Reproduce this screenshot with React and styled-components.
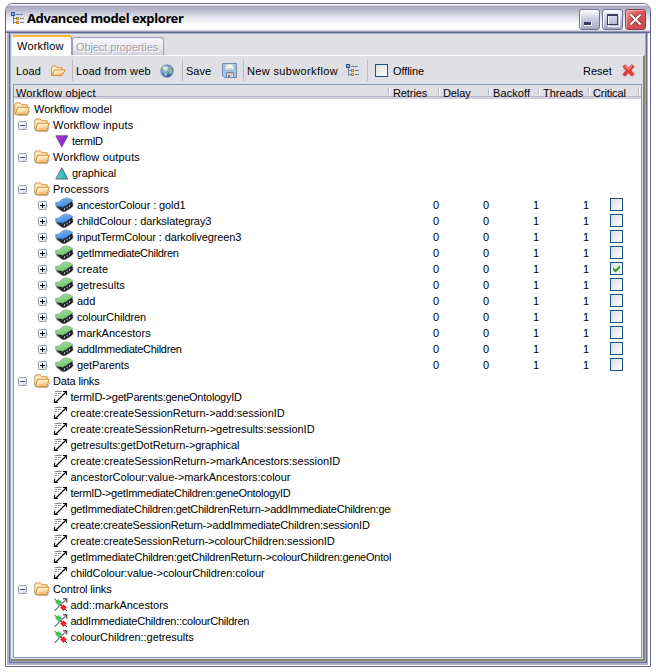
import React from "react";
import styled, { createGlobalStyle } from "styled-components";

const GlobalStyle = createGlobalStyle`
  * { box-sizing: border-box; }
  body {
    margin: 0;
    background: #fff;
    color: #000;
    font: 11px/16px "Liberation Sans", Arial, sans-serif;
    overflow: hidden;
  }
  svg { display: block; flex: none; }
`;

const Desktop = styled.div`
  width: 656px;
  height: 672px;
  padding: 3px 5px 5px;
`;

const WindowShell = styled.div`
  width: 646px;
  height: 664px;
  display: flex;
  flex-direction: column;
  border: 1px solid #65638a;
  border-radius: 8px 8px 0 0;
  background: #fff;
  overflow: hidden;
`;

const TitleBar = styled.header`
  flex: none;
  height: 29px;
  display: flex;
  align-items: center;
  padding: 0 4px 0 5px;
  background: linear-gradient(#fff 0, #fff 1px, #aaa9c3 2px, #b4b3cb 5px, #dddde8 12px, #fbfbfd 20px, #fff 25px, #cccbdc 27px, #65678c 28px);
`;

const Title = styled.h1`
  margin: 0 auto 1px 3px;
  font: bold 13px/20px "Noto Sans", sans-serif;
  letter-spacing: ${(p) => p.$track}px;
  white-space: nowrap;
`;

const WindowButtons = styled.div`
  display: flex;
  gap: 2px;
  padding-top: 1px;
`;

const WindowButton = styled.button`
  width: 21px;
  height: 21px;
  padding: 0;
  display: grid;
  place-items: center;
  border: 1px solid ${(p) => (p.$close ? "#8c3b4c" : "#6c6b91")};
  border-radius: 3px;
  background: ${(p) =>
    p.$close
      ? "linear-gradient(135deg, #f3a4a4, #dd5657 40%, #c94850)"
      : "linear-gradient(#fdfdff, #cfcee0 45%, #a9a8c5)"};
  box-shadow: inset 1px 1px 0 ${(p) => (p.$close ? "#f2aaac" : "#fff")};
`;

const OuterFrame = styled.div`
  flex: 1;
  min-height: 0;
  display: flex;
  margin: 0 2px 1px 1px;
  border: solid #b2b1c9;
  border-width: 0 1px 2px 2px;
`;

const InnerFrame = styled.div`
  flex: 1;
  min-width: 0;
  display: flex;
  border: solid #66698f;
  border-width: 0 1px 1px;
`;

const Pane = styled.div`
  flex: 1;
  min-width: 0;
  display: flex;
  flex-direction: column;
  border: solid #9db2cc;
  border-width: 1px 1px 1px;
  background: #e0dfe3;
`;

const TabStrip = styled.nav`
  flex: none;
  height: 21px;
  display: flex;
  align-items: flex-end;
  padding-left: 1px;
`;

const Tab = styled.div`
  height: ${(p) => (p.$active ? 20 : 18)}px;
  width: ${(p) => p.$width}px;
  padding-left: ${(p) => (p.$active ? 4 : 3)}px;
  line-height: 19px;
  letter-spacing: ${(p) => p.$track || 0}px;
  white-space: nowrap;
  color: ${(p) => (p.$active ? "#000" : "#a2a1a7")};
  text-shadow: ${(p) => (p.$active ? "none" : "1px 1px 0 #fff")};
  border: 1px solid ${(p) => (p.$active ? "#fff" : "#9c9db5")};
  border-top: ${(p) => (p.$active ? "2px solid #fdb52f" : "1px solid #9c9db5")};
  border-right-color: #9c9db5;
  border-bottom: 0;
  border-radius: 3px 3px 0 0;
  background: ${(p) => (p.$active ? "linear-gradient(#f3f2f6, #fff 5px)" : "linear-gradient(#f7f7fa, #e9e8ef 60%, #d1d0dd)")};
`;

const Deck = styled.section`
  flex: 1;
  min-height: 0;
  display: flex;
  flex-direction: column;
  padding: 0 1px 1px 2px;
  border-top: 1px solid #fff;
  border-right: 2px solid #858273;
  border-bottom: 2px solid #858273;
`;

const Toolbar = styled.div`
  flex: none;
  height: 28px;
  display: flex;
  align-items: flex-start;
  padding: 4px 7px 0 3px;
`;

const Tool = styled.div`
  flex: none;
  height: 21px;
  width: ${(p) => p.$width}px;
  display: flex;
  align-items: center;
  justify-content: space-between;
  padding: 0 ${(p) => (p.$pad == null ? 6 : p.$pad)}px 0 0;
  margin: 0 ${(p) => (p.$divided ? 3 : 0)}px 0 ${(p) => p.$before || 0}px;
  border-right: ${(p) => (p.$divided ? "1px solid #b9b8c2" : "0")};
  white-space: nowrap;
  letter-spacing: ${(p) => p.$track || 0}px;
`;

const Spacer = styled.div`
  flex: 1;
`;

const Table = styled.div`
  flex: 1;
  min-height: 0;
  border: 1px solid #7f9db9;
  background: #fff;
`;

const Columns = styled.div`
  display: grid;
  grid-template-columns: 377px repeat(4, 50px) 1fr;
`;

const HeaderRow = styled(Columns)`
  height: 16px;
  background: linear-gradient(#e0dfe3 0 11px, #b9b8cb 11px 12px, #d1d0dc 12px 14px, #fff 14px);
`;

const HeaderCell = styled.div`
  height: 14px;
  padding-left: 2px;
  line-height: 17px;
  letter-spacing: ${(p) => p.$track || 0}px;
  background: linear-gradient(90deg, #b5b4c7 0 1px, #fff 1px 2px) no-repeat right 1px top 3px / 2px 7px;
`;

const BodyRow = styled(Columns)`
  height: 16px;
`;

const TreeCell = styled.div`
  min-width: 0;
  display: flex;
  align-items: center;
  overflow: hidden;
  white-space: nowrap;
  padding-left: ${(p) => p.$indent}px;
`;

const Toggle = styled.span`
  flex: none;
  width: 9px;
  height: 9px;
  margin: 0 ${(p) => (p.$wide ? 8 : 7)}px 0 0;
  display: grid;
  place-items: center;
  border: 1px solid #8d9bb3;
  border-radius: 1.5px;
  background: linear-gradient(135deg, #fff, #dcdce2);
`;

const Label = styled.span`
  margin-left: ${(p) => p.$gap}px;
  line-height: 16px;
  letter-spacing: ${(p) => p.$track}px;
`;

const NumberCell = styled.div`
  padding-right: 2px;
  text-align: right;
`;

const Check = styled.span`
  width: 13px;
  height: 13px;
  display: grid;
  place-items: center;
  margin: ${(p) => (p.$inRow ? "1px 0 0 19px" : "0")};
  border: 1px solid #1c5180;
  background: linear-gradient(135deg, #dcdcd7, #fff);
`;

const ModelIcon = () => (
  <svg width="13" height="13" viewBox="0 0 13 13" fill="none" shapeRendering="crispEdges">
    <path d="M2.5 4v7.5M2 6.5h3M2 10.5h3M5 2.5h7M9 6.5h4M9 10.5h4" stroke="#5f82b7" />
    <path d="M.5.5h3v3h-3z" fill="#8fb0dc" stroke="#31558d" />
    <path d="M5.5 5.5h2v2h-2zM5.5 9.5h2v2h-2z" fill="#ffe27b" stroke="#ba861f" />
  </svg>
);

const FolderIcon = ({ flat }) => (
  <svg width="16" height="14" viewBox="0 0 16 14">
    <defs>
      <linearGradient id="folderFill" x2=".35" y2="1">
        <stop stopColor="#fffbea" />
        <stop offset=".5" stopColor="#ffe6b8" />
        <stop offset="1" stopColor="#f4b864" />
      </linearGradient>
    </defs>
    {!flat && <path d="M3 13.6h10.3l2.4-4.6" fill="none" stroke="#8f8b84" strokeOpacity=".6" />}
    <path
      d={flat ? "M1.5 11.5V3.2L2.7 2h3l1.5 1.8h5v2" : "M.8 11.5V2.2L2 .9h4L7.5 2.7h5.7v3"}
      fill="#ffeabd"
      stroke="#cf9549"
    />
    <path
      d={flat ? "M1.7 11.6L4.7 6h10.7l-3.8 5.6z" : "M1.2 12.6L3.6 5.2h11.6l-2 7.4z"}
      fill="url(#folderFill)"
      stroke="#cc8e40"
    />
  </svg>
);

const GlobeIcon = () => (
  <svg width="14" height="14" viewBox="0 0 14 14">
    <defs>
      <radialGradient id="globeFill" cx=".35" cy=".3" r=".7">
        <stop stopColor="#d9efff" />
        <stop offset=".5" stopColor="#6aa2dd" />
        <stop offset="1" stopColor="#2d5199" />
      </radialGradient>
    </defs>
    <circle cx="7" cy="7" r="6.2" fill="url(#globeFill)" stroke="#5877a8" strokeWidth=".7" />
    <path d="M2.3 4l2-1.8 2.5-.2L6.3 4 4 5.2l.5 1.7L3.5 8 1.7 6.8zM8.5 3l2.3.6 1.7 2.6-.2 2.6-1.6 2L9.3 8.400 7.700 6.300z" fill="#8fba8f" />
    <path d="M5 8.300l2.200 1.500-1.200 2.500-1.400-1.200z" fill="#b4c98e" />
    <ellipse cx="5.200" cy="3.900" rx="2.400" ry="1.500" fill="#fff" fillOpacity=".65" />
  </svg>
);

const SaveIcon = () => (
  <svg width="15" height="15" viewBox="0 0 15 15">
    <path d="M.5.5h14v14h-12l-2-2z" fill="#a9c3e5" stroke="#7188aa" />
    <path d="M3 1h9v6H3z" fill="#f2f7f2" stroke="#8ba4b9" strokeWidth=".7" />
    <path d="M4.5 1.5v3M10.5 1.5v3M5 5.5h5" stroke="#b9c6c8" strokeWidth=".7" />
    <path d="M4.5 9.5h7v5h-7z" fill="#e8e5d4" stroke="#6d87ad" />
    <path d="M5.5 11h5M9 12.5h1" stroke="#c9ad70" />
    <path d="M6 12h2v2.5H6z" fill="#5876a5" />
  </svg>
);

const ResetIcon = () => (
  <svg width="13" height="13" viewBox="0 0 13 13">
    <path
      d="M3.2.8L6.5 4 9.8.8l2.4 1.8L9 6.3l3.2 3.9-2.3 2L6.5 8.8 3.2 12.2.8 10.4 4 6.5.8 2.6z"
      fill="#ed3b37"
      stroke="#bd3b38"
      strokeWidth=".8"
    />
    <path d="M3 2l3.5 3.4L10 2" stroke="#f69988" fill="none" strokeWidth="1.1" />
  </svg>
);

const TriangleIcon = ({ down }) => (
  <svg width="14" height="13" viewBox="0 0 14 13">
    <defs>
      <linearGradient id="inputFill">
        <stop stopColor="#c72bd7" />
        <stop offset="1" stopColor="#6530e0" />
      </linearGradient>
      <linearGradient id="outputFill">
        <stop stopColor="#56e2cc" />
        <stop offset="1" stopColor="#13a8b9" />
      </linearGradient>
    </defs>
    <path
      d={down ? "M.8.8h12L6.8 12z" : "M.8 12h12L6.8.8z"}
      fill={down ? "url(#inputFill)" : "url(#outputFill)"}
      stroke="#79586f"
    />
  </svg>
);

const ChipIcon = ({ blue }) => (
  <svg width="19" height="16" viewBox="0 0 19 16">
    <defs>
      <linearGradient id="chipBlue" x2=".5" y2="1">
        <stop stopColor="#86c0fa" />
        <stop offset="1" stopColor="#3f87de" />
      </linearGradient>
      <linearGradient id="chipGreen" x2=".5" y2="1">
        <stop stopColor="#a9e2a5" />
        <stop offset="1" stopColor="#73c473" />
      </linearGradient>
    </defs>
    <path d="M.5 10.500l6.500 4.800 3.500-.2 8-5.600V6L9 10z" fill="#666" fillOpacity=".45" />
    <path d="M1 7.500L8 9l9.200-5.500.8 5.200-2 2.300-5.500 3.300-2.800.2L1.500 10z" fill="#25272d" />
    <path
      d="M.6 5.600l3-.5 1.600-1 1.300-1.500L11.400.7l5.900 2.200-.4 1.800-1.600.6-1.300 1.400-1.600.4-1.100 1.500-1.700.3-1.800 1.300-2.800-.8-1.400.3-3-1.300z"
      fill={blue ? "url(#chipBlue)" : "url(#chipGreen)"}
      stroke={blue ? "#3d70aa" : "#5b9b5c"}
      strokeWidth=".5"
    />
    <path d="M9.500 11.200v1.600M12 9.700v1.600M14.500 8v1.600" stroke="#c3c6cf" strokeWidth="1" />
  </svg>
);

const DataLinkIcon = () => (
  <svg width="14" height="14" viewBox="0 0 14 14">
    <path d="M1 1.500h7M1 3.500h2M4 3.500h3M1 5.500h2M4 5.500h1" stroke="#8d8d8d" shapeRendering="crispEdges" />
    <path d="M1.500 12.500l11-11" stroke="#000" strokeWidth="1.200" />
    <path d="M9 1h4v4h-1V3l-1-1H9zM0 9h1v2l1 1h2v1H0z" fill="#000" />
  </svg>
);

const ControlLinkIcon = () => (
  <svg width="14" height="14" viewBox="0 0 14 14">
    <path d="M.5 13L12.500 1M9 .800h3.800V4.500M.5 1l12.500 12" stroke="#222" fill="none" />
    <path d="M4.500 1l3.300 3.300-3.300 3.300-3.300-3.300z" fill="#3fbf58" />
    <path d="M9.500 6.300l3.300 3.300-3.300 3.300-3.300-3.300z" fill="#f5202a" />
  </svg>
);

const SignGlyph = ({ plus }) => (
  <svg width="7" height="7" viewBox="0 0 7 7" shapeRendering="crispEdges">
    <path d={plus ? "M1 3h5v1H1zM3 1h1v5H3z" : "M1 3h5v1H1z"} fill={plus ? "#000" : "#334f7b"} />
  </svg>
);

const TickGlyph = () => (
  <svg width="9" height="9" viewBox="0 0 9 9">
    <path d="M1 3.300l2.500 2.300 4.500-4.400v2.900L3.500 8.400 1 6.100z" fill="#21a121" />
  </svg>
);

const MinimizeGlyph = () => (
  <svg width="19" height="19" viewBox="0 0 19 19" shapeRendering="crispEdges">
    <path d="M4 12h8v4H4z" fill="#fff" />
    <path d="M4 12h7v3H4z" fill="#3b3b61" />
  </svg>
);

const MaximizeGlyph = () => (
  <svg width="19" height="19" viewBox="0 0 19 19" shapeRendering="crispEdges">
    <path d="M5 5h11v11H5z" stroke="#fff" fill="none" />
    <path d="M4.500 5.500h10v9h-10z" stroke="#3b3b61" fill="none" />
    <path d="M4 4h11v2H4z" fill="#3b3b61" />
  </svg>
);

const CloseGlyph = () => (
  <svg width="19" height="19" viewBox="0 0 19 19">
    <path d="M4.500 4.500l10 10M14.500 4.500l-10 10" stroke="#7d2833" strokeWidth="3.200" />
    <path d="M4.500 4.500l10 10M14.500 4.500l-10 10" stroke="#fff" strokeWidth="2" />
  </svg>
);

const kinds = {
  root: { indent: 0, gap: 4, icon: <FolderIcon /> },
  group: { indent: 4, gap: 3, icon: <FolderIcon />, sign: "minus" },
  input: { indent: 41, gap: 3, icon: <TriangleIcon down /> },
  output: { indent: 41, gap: 3, icon: <TriangleIcon /> },
  constant: { indent: 24, gap: 3, icon: <ChipIcon blue />, sign: "plus" },
  processor: { indent: 24, gap: 3, icon: <ChipIcon />, sign: "plus" },
  data: { indent: 40, gap: 2.5, icon: <DataLinkIcon /> },
  control: { indent: 40, gap: 2.5, icon: <ControlLinkIcon /> },
};

const headers = [
  ["Workflow object", 0.15],
  ["Retries", -0.1],
  ["Delay", -0.1],
  ["Backoff", 0.1],
  ["Threads", 0],
  ["Critical", -0.1],
];

const rows = [
  ["root", "Workflow model", 0],
  ["group", "Workflow inputs", 0.2],
  ["input", "termID", -0.4],
  ["group", "Workflow outputs", 0.18],
  ["output", "graphical", -0.05],
  ["group", "Processors", 0.1],
  ["constant", "ancestorColour : gold1", -0.1],
  ["constant", "childColour : darkslategray3", -0.07],
  ["constant", "inputTermColour : darkolivegreen3", -0.12],
  ["processor", "getImmediateChildren", -0.3],
  ["processor", "create", 0.1, true],
  ["processor", "getresults", 0],
  ["processor", "add", 0],
  ["processor", "colourChildren", -0.14],
  ["processor", "markAncestors", 0.03],
  ["processor", "addImmediateChildren", -0.3],
  ["processor", "getParents", -0.1],
  ["group", "Data links", -0.18],
  ["data", "termID->getParents:geneOntologyID", -0.23],
  ["data", "create:createSessionReturn->add:sessionID", -0.05],
  ["data", "create:createSessionReturn->getresults:sessionID", -0.03],
  ["data", "getresults:getDotReturn->graphical", -0.06],
  ["data", "create:createSessionReturn->markAncestors:sessionID", -0.03],
  ["data", "ancestorColour:value->markAncestors:colour", -0.01],
  ["data", "termID->getImmediateChildren:geneOntologyID", -0.31],
  ["data", "getImmediateChildren:getChildrenReturn->addImmediateChildren:geneOntologyID", -0.26],
  ["data", "create:createSessionReturn->addImmediateChildren:sessionID", -0.16],
  ["data", "create:createSessionReturn->colourChildren:sessionID", -0.09],
  ["data", "getImmediateChildren:getChildrenReturn->colourChildren:geneOntologyID", -0.22],
  ["data", "childColour:value->colourChildren:colour", -0.11],
  ["group", "Control links", -0.15],
  ["control", "add::markAncestors", 0],
  ["control", "addImmediateChildren::colourChildren", -0.25],
  ["control", "colourChildren::getresults", -0.06],
];

function TreeRow({ kind, text, track, checked }) {
  const { indent, gap, icon, sign } = kinds[kind];
  const isProcessor = sign === "plus";
  return (
    <BodyRow>
      <TreeCell $indent={indent}>
        {sign && (
          <Toggle $wide={isProcessor}>
            <SignGlyph plus={isProcessor} />
          </Toggle>
        )}
        {icon}
        <Label $gap={gap} $track={track}>{text}</Label>
      </TreeCell>
      {isProcessor && (
        <>
          <NumberCell>0</NumberCell>
          <NumberCell>0</NumberCell>
          <NumberCell>1</NumberCell>
          <NumberCell>1</NumberCell>
          <Check $inRow>{checked && <TickGlyph />}</Check>
        </>
      )}
    </BodyRow>
  );
}

export default function App() {
  return (
    <Desktop>
      <GlobalStyle />
      <WindowShell>
        <TitleBar>
          <ModelIcon />
          <Title $track={-0.39}>Advanced model explorer</Title>
          <WindowButtons>
            <WindowButton aria-label="Minimize"><MinimizeGlyph /></WindowButton>
            <WindowButton aria-label="Maximize"><MaximizeGlyph /></WindowButton>
            <WindowButton aria-label="Close" $close><CloseGlyph /></WindowButton>
          </WindowButtons>
        </TitleBar>
        <OuterFrame>
          <InnerFrame>
            <Pane>
              <TabStrip>
                <Tab $active $width={60} $track={0.2}>Workflow</Tab>
                <Tab $width={92} $track={-0.1}>Object properties</Tab>
              </TabStrip>
              <Deck>
                <Toolbar>
                  <Tool $width={57} $divided $track={0.1}>Load <FolderIcon flat /></Tool>
                  <Tool $width={107} $divided $pad={8} $track={0.15}>Load from web <GlobeIcon /></Tool>
                  <Tool $width={58} $divided>Save <SaveIcon /></Tool>
                  <Tool $width={121} $divided $pad={8} $track={0.36}>New subworkflow <ModelIcon /></Tool>
                  <Tool $width={49} $before={4} $pad={0} $track={-0.1}><Check />Offline</Tool>
                  <Spacer />
                  <Tool $width={52} $pad={0}>Reset <ResetIcon /></Tool>
                </Toolbar>
                <Table>
                  <HeaderRow>
                    {headers.map(([name, track]) => (
                      <HeaderCell key={name} $track={track}>{name}</HeaderCell>
                    ))}
                  </HeaderRow>
                  {rows.map(([kind, text, track, checked]) => (
                    <TreeRow key={text} kind={kind} text={text} track={track} checked={checked} />
                  ))}
                </Table>
              </Deck>
            </Pane>
          </InnerFrame>
        </OuterFrame>
      </WindowShell>
    </Desktop>
  );
}
